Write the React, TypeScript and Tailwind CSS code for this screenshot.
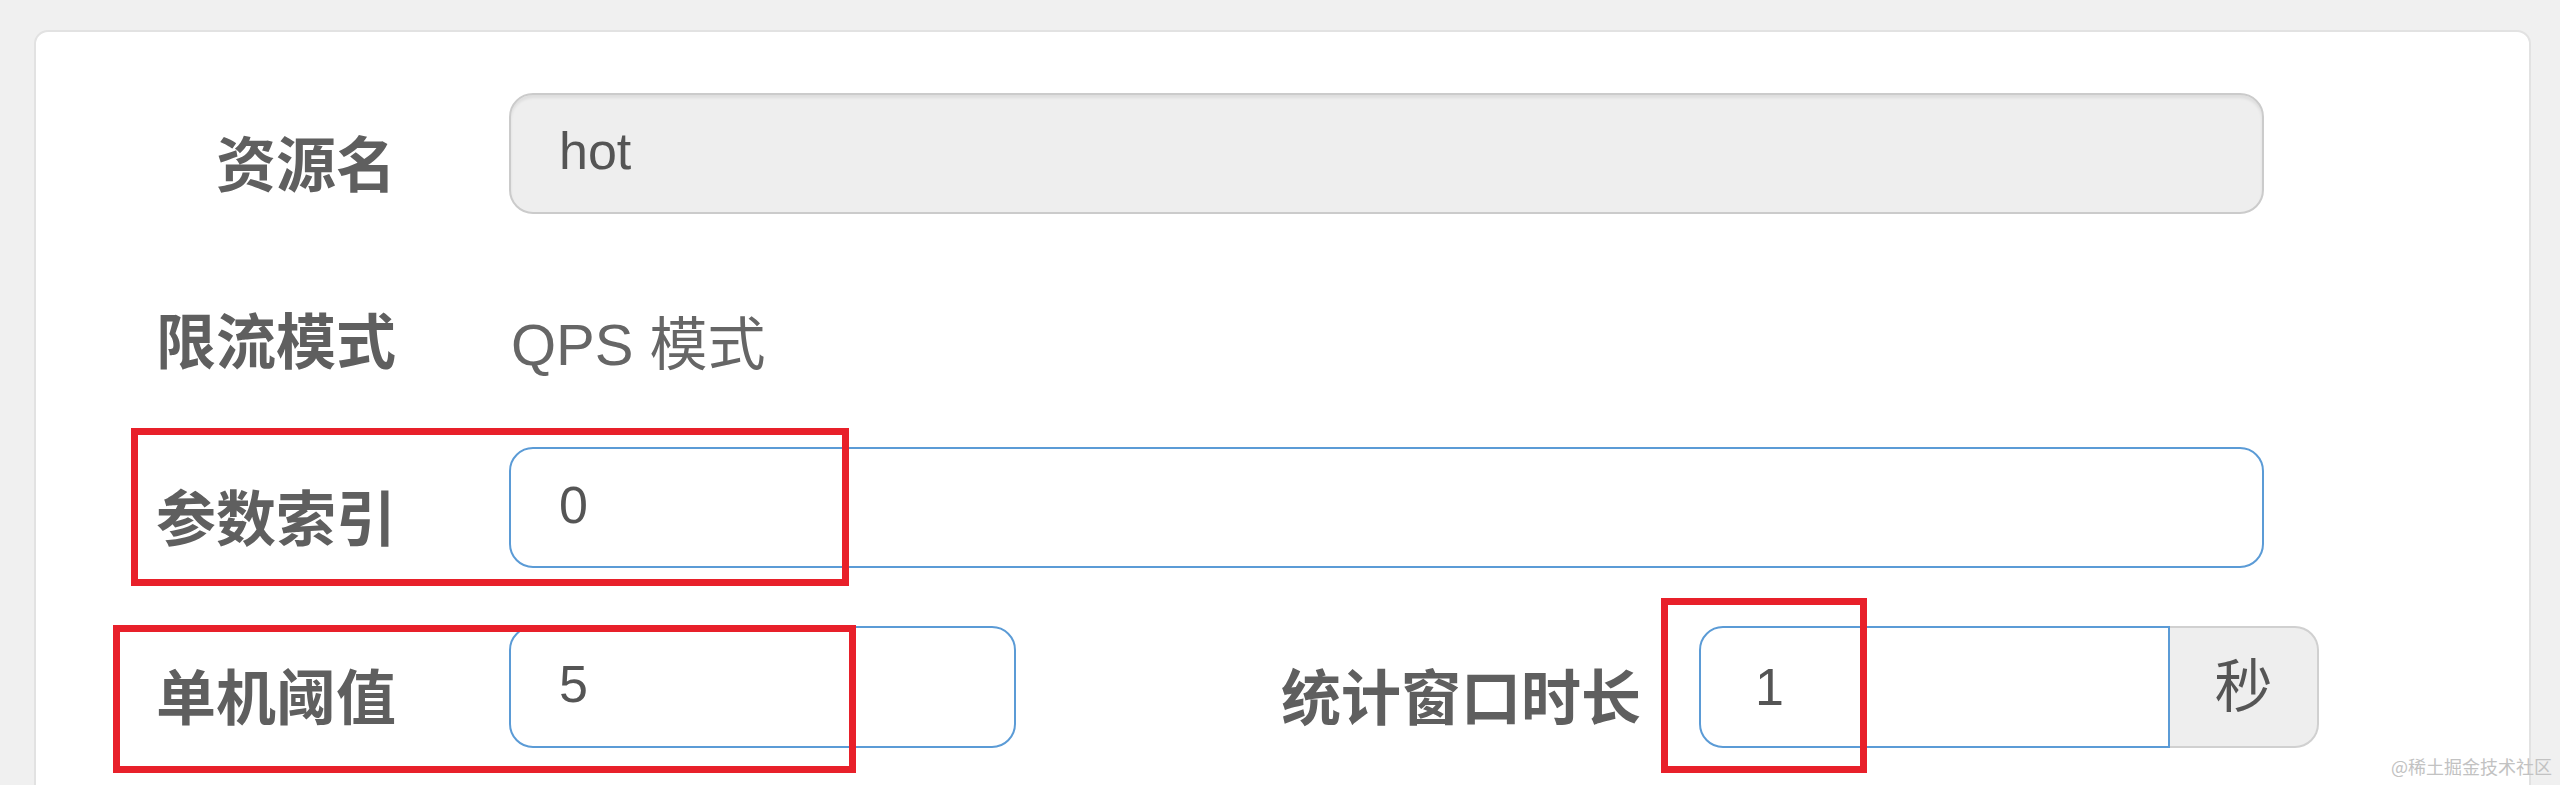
const labelCls =
  "text-right text-[60px] font-bold text-[#5f5f5f] leading-none pt-[14px] [font-family:'Noto_Sans_CJK_SC',sans-serif]";
const textCls = "text-[58px] leading-none [font-family:'Liberation_Sans','Noto_Sans_CJK_SC',sans-serif]";
const valueCls = "text-[52px] leading-none [font-family:'Liberation_Sans','Noto_Sans_CJK_SC',sans-serif]";

const RedBox = ({ className }: { className: string }) => (
  <div className={`absolute border-[7px] border-[#e8202a] pointer-events-none ${className}`} />
);

export default function App() {
  return (
    <div className="relative h-[785px] overflow-hidden bg-[#f0f0f0] pt-[30px] pl-[34px] pr-[29px]">
      <div className="relative h-[820px] rounded-[14px] border-2 border-[#e2e2e2] bg-white pt-[61px]">
        {/* 资源名 */}
        <div className="flex h-[121px] items-center">
          <div className={`w-[360px] ${labelCls}`}>资源名</div>
          <div
            className={`ml-[113px] flex h-full w-[1755px] items-center rounded-[24px] border-2 border-[#cbcbcb] bg-[#eeeeee] px-[48px] pb-[6px] text-[#555] shadow-[inset_0_3px_3px_rgba(0,0,0,0.07)] ${valueCls}`}
          >
            hot
          </div>
        </div>

        {/* 限流模式 */}
        <div className="mt-[58px] flex h-[117px] items-center">
          <div className={`w-[360px] ${labelCls}`}>限流模式</div>
          <div className={`ml-[115px] pt-[28px] text-[#666] ${textCls}`}>QPS 模式</div>
        </div>

        {/* 参数索引 */}
        <div className="mt-[58px] flex h-[121px] items-center">
          <div className={`w-[360px] ${labelCls}`}>参数索引</div>
          <div
            className={`ml-[113px] flex h-full w-[1755px] items-center rounded-[24px] border-2 border-[#5b9bd6] bg-white px-[48px] pb-[6px] text-[#555] ${valueCls}`}
          >
            0
          </div>
        </div>

        {/* 单机阈值 / 统计窗口时长 */}
        <div className="mt-[58px] flex h-[122px] items-center">
          <div className={`w-[360px] ${labelCls}`}>单机阈值</div>
          <div
            className={`ml-[113px] flex h-full w-[507px] items-center rounded-[24px] border-2 border-[#5b9bd6] bg-white px-[48px] pb-[6px] text-[#555] ${valueCls}`}
          >
            5
          </div>
          <div className={`w-[625px] ${labelCls}`}>统计窗口时长</div>
          <div className="ml-[58px] flex h-full">
            <div
              className={`flex h-full w-[471px] items-center rounded-l-[24px] border-2 border-[#5b9bd6] bg-white px-[54px] text-[#555] ${valueCls}`}
            >
              1
            </div>
            <div
              className={`flex h-full w-[149px] items-center justify-center rounded-r-[24px] border-2 border-l-0 border-[#d0d0d0] bg-[#eeeeee] text-[#555] ${textCls}`}
            >
              秒
            </div>
          </div>
        </div>

        <RedBox className="left-[95px] top-[396px] h-[158px] w-[718px]" />
        <RedBox className="left-[77px] top-[593px] h-[148px] w-[743px]" />
        <RedBox className="left-[1625px] top-[566px] h-[175px] w-[206px]" />
      </div>

      <div className="absolute right-[8px] top-[757px] text-[18px] leading-none text-[#c2c2c2] [font-family:'Noto_Sans_CJK_SC',sans-serif]">
        @稀土掘金技术社区
      </div>
    </div>
  );
}
